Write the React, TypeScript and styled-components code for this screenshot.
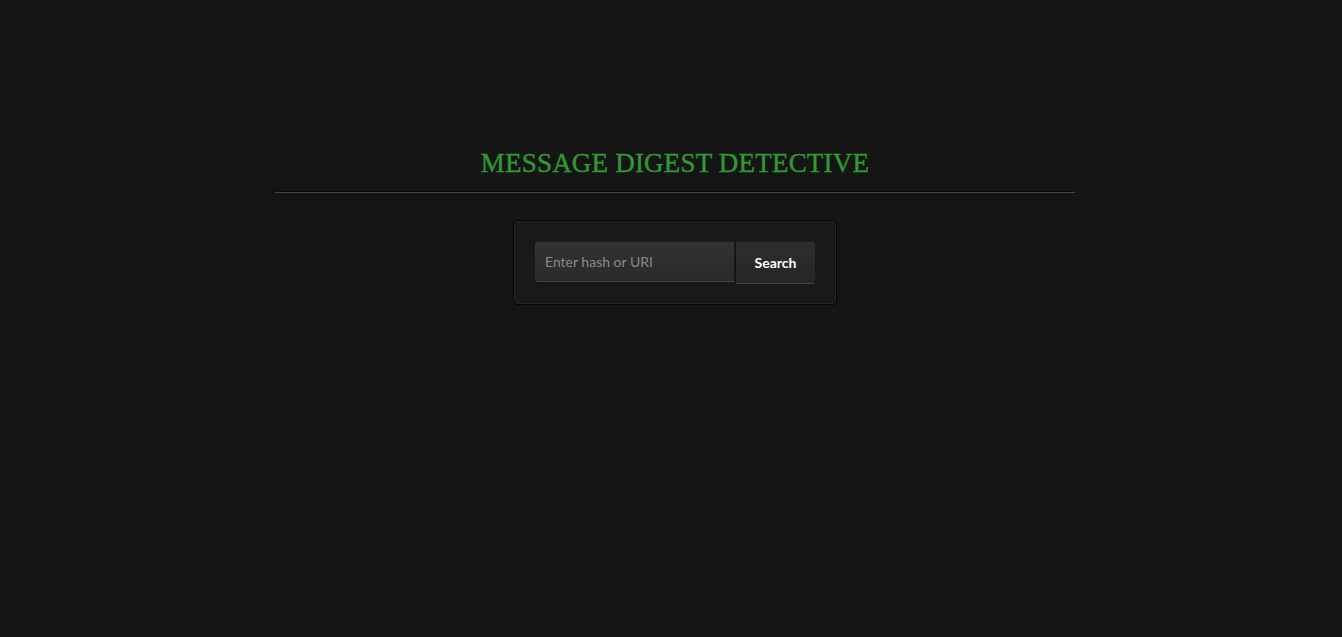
import React from "react";
import styled, { createGlobalStyle } from "styled-components";

const Global = createGlobalStyle`
  html, body { margin: 0; padding: 0; background: #151515; }
  body { padding-left: 8px; font-family: Lato, "Noto Sans", sans-serif; color: #ddd; min-height: 637px; }
`;

const Page = styled.div`
  width: 800px;
  margin: 0 auto;
  padding-top: 147px;
  display: flex;
  flex-direction: column;
  align-items: center;
`;

const Title = styled.h1`
  margin: 0;
  font-family: "Liberation Serif", serif;
  font-weight: normal;
  font-size: 27px;
  line-height: 32px;
  letter-spacing: 0.2px;
  color: #2f9a30;
  -webkit-text-stroke: 0.4px #2f9a30;
`;

const Rule = styled.hr`
  width: 800px;
  margin: 12px 0 27px;
  border: 0;
  border-top: 1px solid #0c0c0c;
  border-bottom: 1px solid #464646;
  height: 0;
`;

const Panel = styled.form`
  box-sizing: border-box;
  width: 324px;
  padding: 20px;
  background: #191919;
  border: 1px solid #070707;
  border-radius: 4px;
  box-shadow: inset 0 0 0 1px #222;
  display: flex;
  align-items: flex-start;
`;

const Input = styled.input`
  box-sizing: border-box;
  width: 201px;
  height: 41px;
  padding: 0 10px;
  border: 1px solid #1b1b1b;
  border-bottom-color: #444;
  border-radius: 4px 0 0 4px;
  background: linear-gradient(#333, #292929);
  color: #ddd;
  font-family: Lato, sans-serif;
  font-size: 14px;
  outline: none;
  &::placeholder { color: #8a8a8a; }
`;

const Button = styled.button`
  box-sizing: border-box;
  width: 81px;
  height: 43px;
  border: 1px solid #1b1b1b;
  border-left: 1px solid #111;
  border-bottom-color: #444;
  border-radius: 0 4px 4px 0;
  background: linear-gradient(#2e2e2e, #262626);
  color: #fff;
  font-family: Lato, sans-serif;
  font-weight: bold;
  font-size: 14px;
  cursor: pointer;
`;

export default function App() {
  return (
    <>
      <Global />
      <Page>
        <Title>MESSAGE DIGEST DETECTIVE</Title>
        <Rule />
        <Panel onSubmit={(e) => e.preventDefault()}>
          <Input placeholder="Enter hash or URI" />
          <Button type="submit">Search</Button>
        </Panel>
      </Page>
    </>
  );
}
